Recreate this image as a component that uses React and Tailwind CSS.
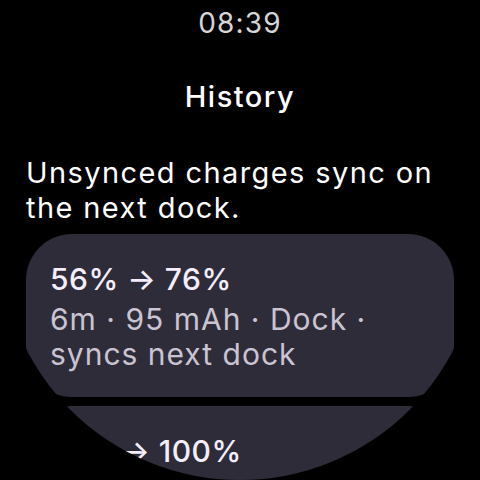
const entries = [
  { range: "81% → 100%", detail: "14m · 120 mAh · Dock · synced" },
];

function HistoryCard({ range, detail }) {
  return (
    <div className="w-[428px] shrink-0 rounded-[46px] bg-[#2f2c3a] pl-[24px] pr-[16px] pt-[27px] pb-[25px]">
      <p className="text-[30px] leading-[36px] font-medium tracking-[0.5px] text-[#f4eefc]">{range}</p>
      <p className="mt-[5px] text-[30px] leading-[35px] tracking-[1px] text-[#cac4d2]">{detail}</p>
    </div>
  );
}

export default function App() {
  return (
    <div className="w-[480px] h-[480px] bg-black overflow-hidden">
      <div
        className="w-[480px] h-[480px] rounded-full overflow-hidden bg-black flex flex-col items-center"
        style={{ fontFamily: "Inter, 'Noto Sans', sans-serif" }}
      >
        <p className="mt-[7px] text-[28px] leading-[32px] tracking-[1.2px] text-[#d6d6d6]">08:39</p>
        <h1 className="mt-[40px] text-[29px] leading-[36px] font-medium tracking-[1.5px] text-white">History</h1>
        <p className="mt-[40px] w-[428px] text-[29px] leading-[35px] tracking-[1.4px] text-white">
          Unsynced charges sync on the next dock.
        </p>
        <div className="mt-[9px] flex flex-col items-center gap-[9px]">
          <HistoryCard range="56% → 76%" detail="6m · 95 mAh · Dock · syncs next dock" />
          {entries.map((e) => (
            <HistoryCard key={e.range} {...e} />
          ))}
        </div>
      </div>
    </div>
  );
}
